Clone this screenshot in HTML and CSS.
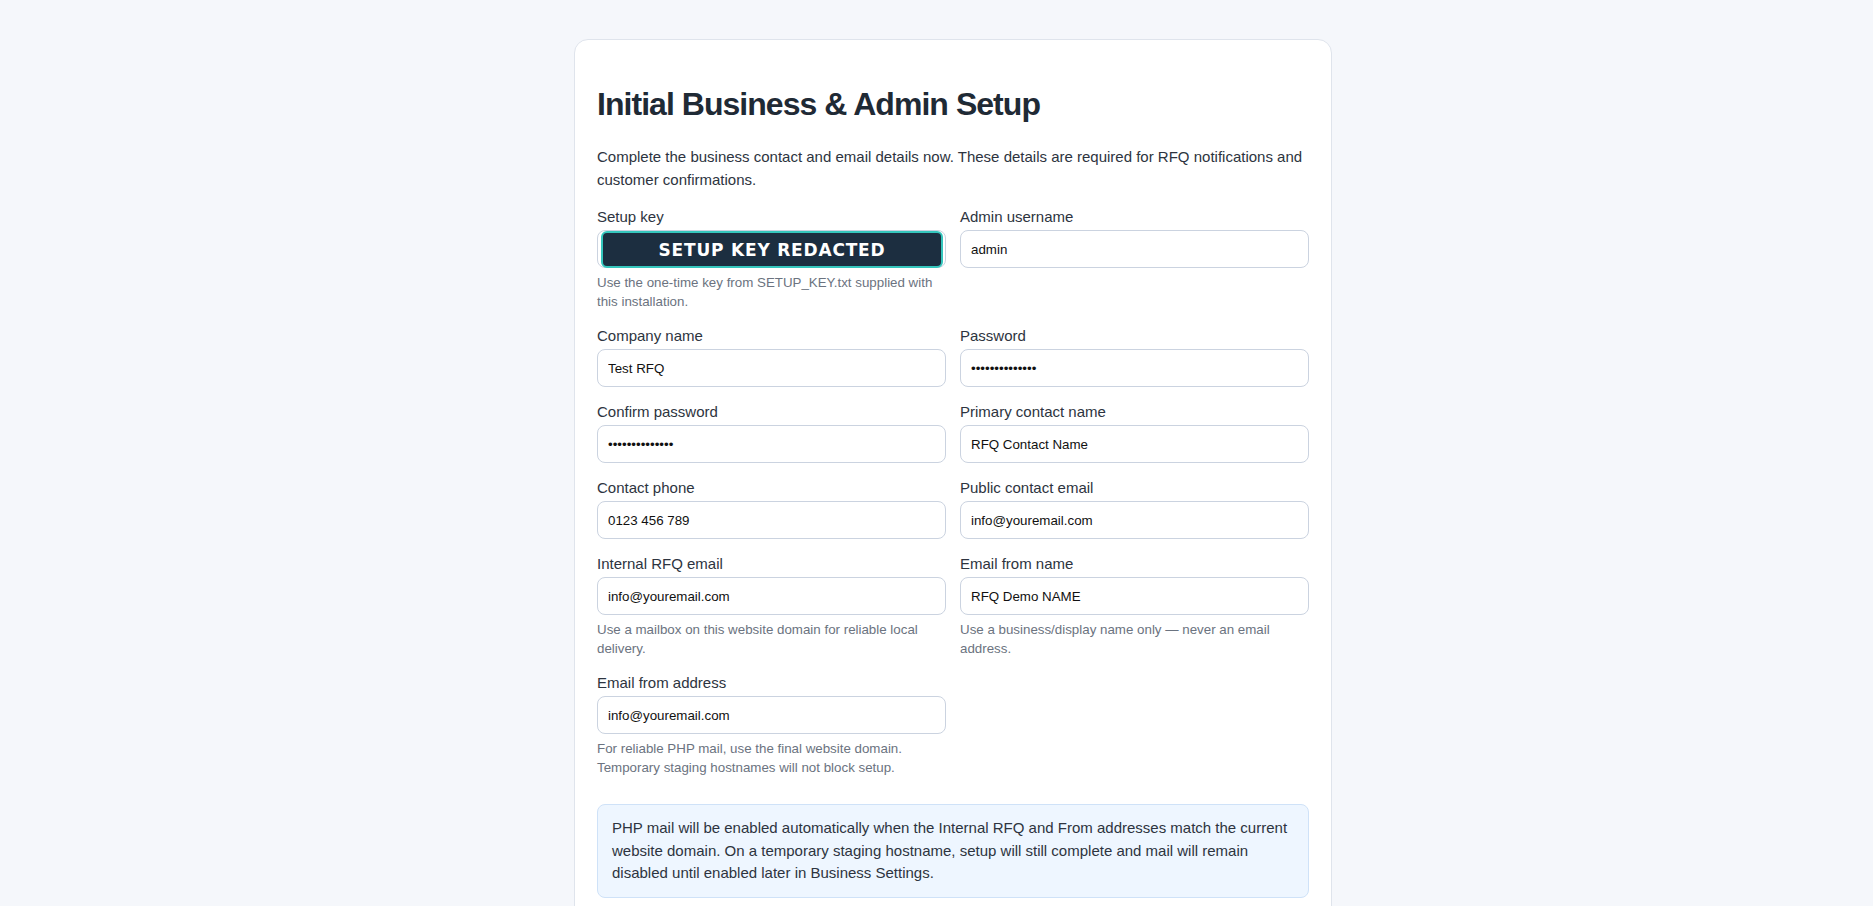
FILE: index.html
```html
<!DOCTYPE html>
<html lang="en">
<head>
    <meta charset="UTF-8">
    <meta name="viewport" content="width=device-width, initial-scale=1.0">
    <title>Initial Business &amp; Admin Setup</title>
    <link rel="stylesheet" href="styles.css">
</head>
<body>

  <!-- first run setup: business details + admin account -->
  <div class="card">
    <h1 class="title">Initial Business &amp; Admin Setup</h1>
    <p class="intro">Complete the business contact and email details now. These details are required for RFQ notifications and customer confirmations.</p>

    <form class="setup-form" onsubmit="return false">
      <div class="grid">

        <div class="field">
          <label class="field-label" for="setup_key">Setup key</label>
          <div class="key-wrap">
            <input class="field-input" id="setup_key" type="text" value="">
            <div class="key-mask">SETUP KEY REDACTED</div>
          </div>
          <p class="field-help">Use the one-time key from SETUP_KEY.txt supplied with this installation.</p>
        </div>

        <div class="field">
          <label class="field-label" for="admin_user">Admin username</label>
          <input class="field-input" id="admin_user" type="text" value="admin">
        </div>

        <div class="field">
          <label class="field-label" for="company">Company name</label>
          <input class="field-input" id="company" type="text" value="Test RFQ">
        </div>

        <div class="field">
          <label class="field-label" for="password">Password</label>
          <input class="field-input" id="password" type="password" value="passwordpasswo">
        </div>

        <div class="field">
          <label class="field-label" for="password2">Confirm password</label>
          <input class="field-input" id="password2" type="password" value="passwordpasswo">
        </div>

        <div class="field">
          <label class="field-label" for="contact_name">Primary contact name</label>
          <input class="field-input" id="contact_name" type="text" value="RFQ Contact Name">
        </div>

        <div class="field">
          <label class="field-label" for="phone">Contact phone</label>
          <input class="field-input" id="phone" type="text" value="0123 456 789">
        </div>

        <div class="field">
          <label class="field-label" for="public_email">Public contact email</label>
          <input class="field-input" id="public_email" type="email" value="info@youremail.com">
        </div>

        <div class="field">
          <label class="field-label" for="rfq_email">Internal RFQ email</label>
          <input class="field-input" id="rfq_email" type="email" value="info@youremail.com">
          <p class="field-help">Use a mailbox on this website domain for reliable local delivery.</p>
        </div>

        <div class="field">
          <label class="field-label" for="from_name">Email from name</label>
          <input class="field-input" id="from_name" type="text" value="RFQ Demo NAME">
          <p class="field-help">Use a business/display name only &mdash; never an email address.</p>
        </div>

        <div class="field">
          <label class="field-label" for="from_email">Email from address</label>
          <input class="field-input" id="from_email" type="email" value="info@youremail.com">
          <p class="field-help">For reliable PHP mail, use the final website domain. Temporary staging hostnames will not block setup.</p>
        </div>

      </div>

      <div class="notice">
        PHP mail will be enabled automatically when the Internal RFQ and From addresses match the current website domain. On a temporary staging hostname, setup will still complete and mail will remain disabled until enabled later in Business Settings.
      </div>
    </form>
  </div>

</body>
</html>
```

FILE: styles.css
```css
*{
   box-sizing: border-box;
}
body{
   margin: 0;
   padding-left: 33px;
   background-color: #f5f7fb;
   font-family: "Liberation Sans", Arial, Helvetica, sans-serif;
   color: #2d3440;
}
.card{
   width: 758px;
   margin: 39px auto 0;
   padding: 22px 22px 40px;
   background-color: #fff;
   border: 1px solid #dfe4ec;
   border-radius: 14px;
}
.title{
   margin: 22px 0 22px;
   font-size: 32px;
   line-height: 40px;
   letter-spacing: -0.03em;
   font-weight: bold;
   color: #1f2a35;
}
.intro{
   margin: 0 0 17px;
   font-size: 15px;
   line-height: 22.5px;
   color: #2d3440;
}
.grid{
   display: grid;
   grid-template-columns: 1fr 1fr;
   column-gap: 14px;
   row-gap: 16px;
   align-items: start;
}
.field-label{
   display: block;
   margin-bottom: 4px;
   font-size: 15px;
   line-height: 18px;
   color: #2d3440;
}
.field-input{
   display: block;
   width: 100%;
   height: 38px;
   padding: 0 10px;
   border: 1px solid #cbd3e0;
   border-radius: 8px;
   background: #fff;
   font-family: "Liberation Sans", Arial, sans-serif;
   font-size: 13.33px;
   color: #111;
}
.field-help{
   margin: 5px 0 0;
   font-size: 13.33px;
   line-height: 19px;
   color: #6b7380;
}
.key-wrap{
   position: relative;
}
.key-mask{
   position: absolute;
   top: 1px;
   left: 4px;
   right: 3px;
   bottom: 0;
   display: flex;
   align-items: center;
   justify-content: center;
   background-color: #1c2e40;
   border: 2px solid #35c6bd;
   border-radius: 6px;
   font-family: "DejaVu Sans", Verdana, sans-serif;
   font-weight: bold;
   font-size: 17px;
   letter-spacing: 0.8px;
   color: #fff;
}
.notice{
   margin-top: 27px;
   padding: 12px 14px;
   background-color: #eef6ff;
   border: 1px solid #cfe2f8;
   border-radius: 8px;
   font-size: 15px;
   line-height: 22.5px;
   color: #2d3440;
}
```
